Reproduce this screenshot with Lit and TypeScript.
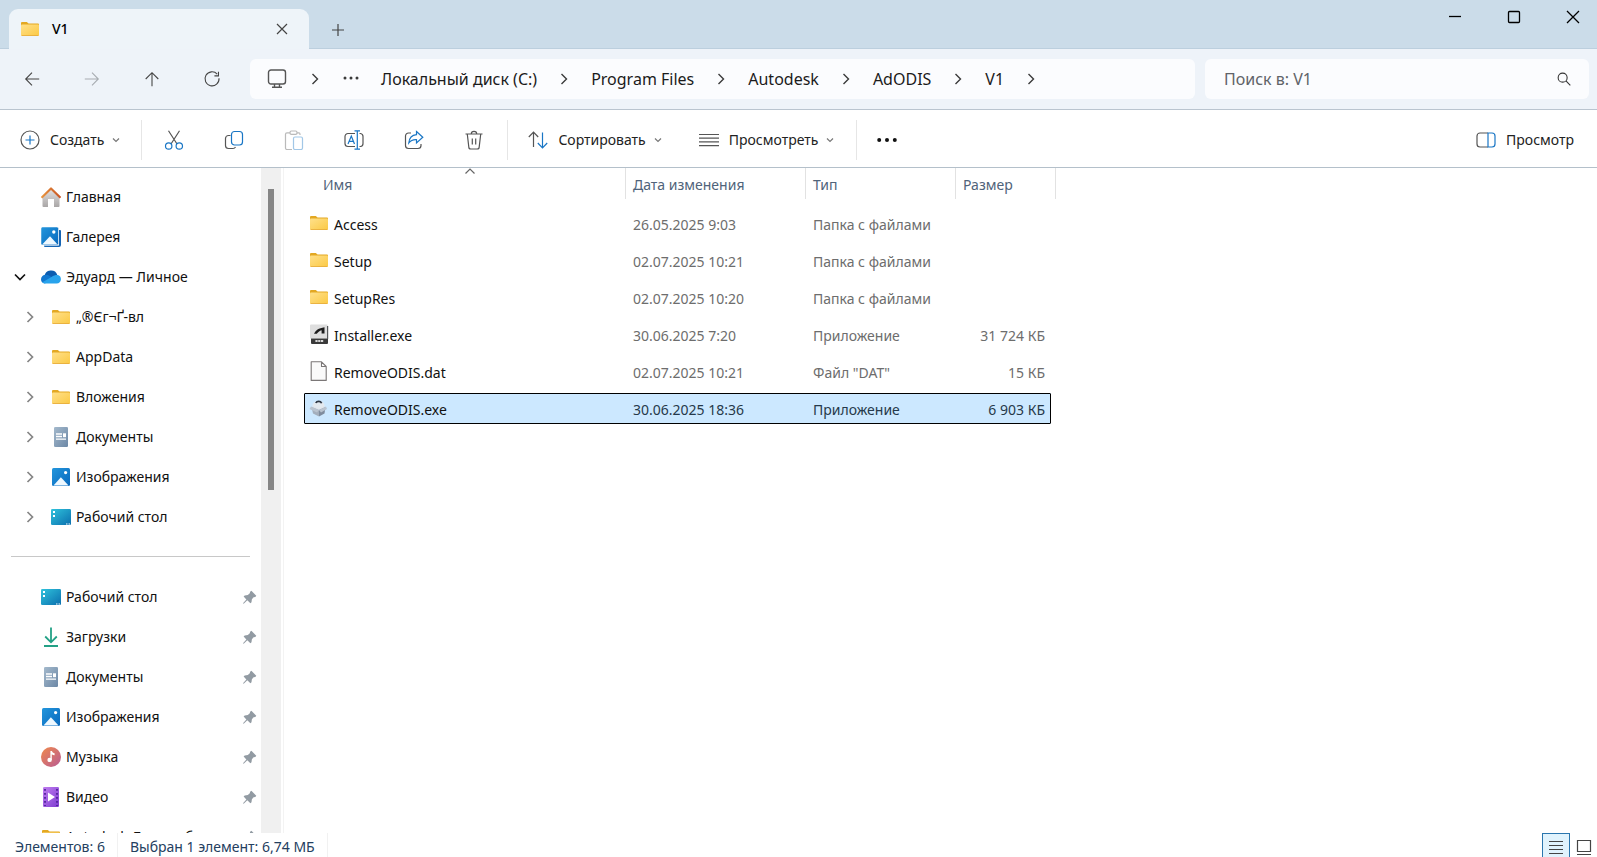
import { LitElement, html, css, svg, nothing } from "lit";
import { customElement, state } from "lit/decorators.js";

const glyphs: Record<string, unknown> = {
  close: svg`<path d="M5 5L15 15M15 5L5 15" />`,
  plus: svg`<path d="M10 4V16M4 10H16" />`,
  minimize: svg`<path d="M4 9.5H16" />`,
  maximize: svg`<rect x="4.5" y="4.5" width="11" height="11" rx="1" />`,
  windowClose: svg`<path d="M4 4L16 16M16 4L4 16" />`,
  back: svg`<path d="M18 10H3.5M10 3L3 10L10 17" />`,
  forward: svg`<path d="M2 10H16.5M10 3L17 10L10 17" />`,
  up: svg`<path d="M10 18V3.5M3 10L10 3L17 10" />`,
  refresh: svg`<path d="M15.8 4.6A7.8 7.8 0 1 0 17.8 9.2M17.2 2V6.5H12.7" />`,
  monitor: svg`<rect x="1.5" y="1" width="17" height="14" rx="2.5" /><path d="M7.5 15V18M12.5 15V18M5 18.3H15" />`,
  search: svg`<circle cx="8.5" cy="8.5" r="5" /><path d="M12.2 12.2L17 17" />`,
  right: svg`<path d="M7.5 5L12.5 10L7.5 15" />`,
  down: svg`<path d="M5 7.5L10 12.5L15 7.5" />`,
  smallDown: svg`<path d="M7 8.5L10 11.5L13 8.5" />`,
  smallUp: svg`<path d="M5.5 12.5L10 8L14.5 12.5" />`,
  dots: svg`<g fill="currentColor" stroke="none"><circle cx="4" cy="9" r="1.5" /><circle cx="10" cy="9" r="1.5" /><circle cx="16" cy="9" r="1.5" /></g>`,
  more: svg`<g fill="currentColor" stroke="none"><circle cx="2.2" cy="10" r="2" /><circle cx="10" cy="10" r="2" /><circle cx="17.8" cy="10" r="2" /></g>`,
  create: svg`<circle cx="10" cy="10" r="9" /><path class="blue" d="M10 5.5V14.5M5.5 10H14.5" />`,
  cut: svg`<path d="M4.5 .8L13 14M15.5 .8L7 14" /><g class="blue"><circle cx="4.7" cy="16" r="3.2" /><circle cx="15.3" cy="16" r="3.2" /></g>`,
  copy: svg`<path d="M6.5 5.5H4.5A3 3 0 0 0 1.5 8.5V15.5A3 3 0 0 0 4.5 18.5H9A3 3 0 0 0 11.5 17" /><rect class="blue" x="7.5" y="1.5" width="11" height="13.5" rx="3" />`,
  paste: svg`<path d="M6 2.8H3A1.5 1.5 0 0 0 1.5 4.3V18A1.5 1.5 0 0 0 3 19.5H8M13 2.8H15A1.5 1.5 0 0 1 16 4.3V5" /><rect x="6" y="1" width="7" height="3.4" rx="1.4" /><rect class="blue" x="9.5" y="7" width="9" height="12.5" rx="1.5" />`,
  rename: svg`<path d="M11 3.5H4A3 3 0 0 0 1 6.5V13.5A3 3 0 0 0 4 16.5H11M15.5 3.5H16.5A3 3 0 0 1 19 6.5V13.5A3 3 0 0 1 16.5 16.5H15.5" /><path class="blue" d="M13.3 .8V19.2M10.5 .8H16M10.5 19.2H16M4 14L7.3 6L10.5 14M5.2 11.3H9.4" />`,
  share: svg`<path d="M7 3H4.5A3 3 0 0 0 1.5 6V15.5A3 3 0 0 0 4.5 18.5H14A3 3 0 0 0 17 15.5V14" /><path class="blue" d="M12.5 1.5L18.8 7.2L12.5 13V9.7C9 9.5 6.5 10.7 4.8 13C5.2 8.5 8 5 12.5 4.7Z" />`,
  trash: svg`<path d="M1.5 4H18.5M7.3 3.8C7.3 .5 12.7 .5 12.7 3.8M3.3 4.3L4.8 17A2 2 0 0 0 6.8 19H13.2A2 2 0 0 0 15.2 17L16.7 4.3M8.3 8.5V14.5M11.7 8.5V14.5" />`,
  sort: svg`<path d="M5.5 17V2.5M.8 7L5.5 2.2L10.2 7" /><path class="blue" d="M14.5 2.5V17M9.8 13L14.5 17.8L19.2 13" />`,
  list: svg`<path d="M0 4.5H20M0 8.2H20M0 11.9H20M0 15.6H20" />`,
  pane: svg`<path d="M12 3H4A3 3 0 0 0 1 6V14A3 3 0 0 0 4 17H12" /><path class="blue" d="M12 3H16A3 3 0 0 1 19 6V14A3 3 0 0 1 16 17H12Z" />`,
  pin: svg`<path fill="currentColor" stroke="none" d="M11.4 3.8L16.3 8.7L15.3 10L13.6 10.2L11.9 12.2L11.5 15.2L10.4 16.3L7.3 13.2L3.7 16.8L3 16.2L6.4 12.4L3.6 9.5L4.7 8.4L7.8 8.1L9.8 6.3L10.1 4.8Z" />`,
};

const pictures: Record<string, unknown> = {
  folder: svg`<path fill="#e3a822" d="M1 4A1 1 0 0 1 2 3H6.8L8.6 4.6H18A1 1 0 0 1 19 5.6V9H1Z" /><rect x="1" y="5.5" width="18" height="11.5" rx="1" fill="url(#gFolder)" /><path fill="#e5a93a" d="M1.3 16.2H18.7L18 17H2Z" />
    <defs><linearGradient id="gFolder" x1="0" y1="0" x2="1" y2="1"><stop offset="0" stop-color="#ffe08a" /><stop offset="1" stop-color="#fbc944" /></linearGradient></defs>`,
  home: svg`<path fill="url(#gHome)" d="M1.5 9L10 2L18.5 9V19A1 1 0 0 1 17.6 20H13V12H7V20H2.4A1 1 0 0 1 1.5 19Z" /><path fill="none" stroke="url(#gRoof)" stroke-width="2.2" stroke-linejoin="round" d="M.5 10.8L10 1.5L19.5 10.8" />
    <defs><linearGradient id="gHome" x1="0" y1="0" x2="0" y2="1"><stop offset="0" stop-color="#e4e2e2" /><stop offset="1" stop-color="#a9a6a6" /></linearGradient><linearGradient id="gRoof"><stop offset="0" stop-color="#e8953f" /><stop offset="1" stop-color="#c85423" /></linearGradient></defs>`,
  gallery: svg`<path fill="#1565b4" d="M18 3H19A1 1 0 0 1 20 4V18A2 2 0 0 1 18 20H4A1 1 0 0 1 3 19V18.5H18Z" /><rect width="17.5" height="18" rx="1.5" fill="url(#gPic)" stroke="#fff" stroke-width=".5" /><path fill="#eef8ff" d="M1.2 17.5L9 9.3L16.6 17.5Z" /><circle cx="12.8" cy="5" r="1.7" fill="#fff" />
    <defs><linearGradient id="gPic" x1="0" y1="0" x2="1" y2="1"><stop offset="0" stop-color="#2396dc" /><stop offset="1" stop-color="#0868bd" /></linearGradient></defs>`,
  cloud: svg`<path fill="#0b5cb0" d="M3.5 9.5A6.6 6.6 0 0 1 16.3 8L18.5 12L8 14Z" /><path fill="#1177cf" d="M0 12.3A4.6 4.6 0 0 1 4.8 7.8C7 7.6 9 9 12 11L4 16.5A4.3 4.3 0 0 1 0 12.3Z" /><path fill="#28a3ec" d="M4.7 16.6C3 16.6 2 16 1.4 15.2L10.5 10C14.5 7.2 18 7.5 19.3 9.7C21 13 19 16.6 15.6 16.6Z" />`,
  document: svg`<rect x="3" width="14" height="20" rx="1.3" fill="url(#gDoc)" /><path fill="none" stroke="#fff" stroke-width="1.3" d="M5 7H11M5 9.5H11M5 12.2H15" /><path fill="#fff" d="M12 6.3H15V10.2H12Z" />
    <defs><linearGradient id="gDoc" x1="0" y1="0" x2="1" y2="1"><stop offset="0" stop-color="#a4b9cc" /><stop offset="1" stop-color="#6c88a6" /></linearGradient></defs>`,
  image: svg`<rect x="1" y="1" width="18" height="18" rx="1.5" fill="url(#gImg)" /><path fill="#eef8ff" d="M2.5 18.4L9.9 10.2L17.5 18.4Z" /><circle cx="14.6" cy="5.6" r="1.6" fill="#fff" />
    <defs><linearGradient id="gImg" x1="0" y1="0" x2="1" y2="1"><stop offset="0" stop-color="#2396dc" /><stop offset="1" stop-color="#0868bd" /></linearGradient></defs>`,
  desktop: svg`<rect y="2" width="20" height="16" rx="1.3" fill="url(#gDesk)" /><path fill="#fff" d="M2 4H4V6H2ZM2 8H4V10H2ZM15 16.5H16.5V17.5H15ZM17.5 16.5H19V17.5H17.5Z" />
    <defs><linearGradient id="gDesk" x1="0" y1="0" x2="1" y2="1"><stop offset="0" stop-color="#2fc3dc" /><stop offset="1" stop-color="#0b6fae" /></linearGradient></defs>`,
  download: svg`<path fill="none" stroke="#23a186" stroke-width="1.8" d="M10 .5V15M4.2 9.5L10 15.3L15.8 9.5M3 19H17" />`,
  music: svg`<circle cx="10" cy="10" r="10" fill="url(#gMusic)" /><circle cx="8.6" cy="12.9" r="2.2" fill="#fff" /><path fill="#fff" d="M9.4 4H11C11.3 5.4 12.2 6 13.6 6.2V8.2C12.4 8.2 11.5 7.8 10.8 7.2V13H9.4Z" />
    <defs><linearGradient id="gMusic" x1="0" y1="0" x2="1" y2="1"><stop offset="0" stop-color="#f08a4c" /><stop offset="1" stop-color="#b85a94" /></linearGradient></defs>`,
  video: svg`<rect x="2" width="16" height="20" rx="1.2" fill="url(#gVideo)" /><path fill="#fff" d="M7 5.5L14 10L7 14.5Z" /><path fill="none" stroke="#4b1f96" stroke-width="1.7" stroke-dasharray="1.7 2.3" d="M4 2V19M16 2V19" />
    <defs><linearGradient id="gVideo" x1="0" y1="0" x2="1" y2="1"><stop offset="0" stop-color="#c07cf0" /><stop offset="1" stop-color="#7d3cd0" /></linearGradient></defs>`,
  installer: svg`<path fill="#dedede" d="M1 1.5A1 1 0 0 1 2 .5H18.5V14.5H1Z" /><path fill="#3a3a3a" d="M2 14.5H19V19A1 1 0 0 1 18 20H3A1 1 0 0 1 2 19Z" /><path fill="#55585a" d="M18 2H19.2V15H18Z" /><path fill="#1c1c1c" d="M5 9.8C6.5 6.5 9.5 4 15.5 3.2V9.5H12.6V6.2C10.5 6.8 8.8 8.2 7.8 9.8Z" /><path stroke="#d8d8d8" stroke-width="2" stroke-dasharray="2.2 .6" d="M6.4 17H14.6" />`,
  file: svg`<path fill="#fafafa" stroke="#7b7777" stroke-width="1.1" stroke-linejoin="round" d="M2.2 .8H12.5L17.2 5.5V19.4H2.2ZM12.5 .8V5.5H17.2" />`,
  remove: svg`<path fill="#dfe5ec" d="M2 9L10 6.5L17 9L10 12Z" /><path fill="#a3aebc" d="M2.5 9L10 12V18.5L4 15.5Z" /><path fill="#7f8c9d" d="M16.5 9L10 12V18.5L15.5 15.5Z" /><path fill="#b9c3cf" d="M2 8.5L.5 11L8 14.4L10 12ZM17 8.5L18 11L12 14.4L10 12Z" /><path fill="#e3e9ef" d="M3.5 8C3.5 4.5 6.5 3 9.5 3S15.5 4.5 15.5 8L10 11Z" /><path fill="none" stroke="#2d3642" stroke-width="1.7" d="M6.8 5C7.8 2.8 11.6 2.6 12.6 5.2" />`,
};

const glyph = (name: string, cls = "") =>
  html`<svg class="glyph ${cls}" viewBox="0 0 20 20" aria-hidden="true">${glyphs[name]}</svg>`;
const picture = (name: string) =>
  html`<svg class="picture" viewBox="0 0 20 20" aria-hidden="true">${pictures[name]}</svg>`;

interface Place { icon: string; label: string; open?: boolean; }
interface Entry { icon: string; name: string; date: string; type: string; size: string; }

@customElement("app-root")
export class AppRoot extends LitElement {
  @state() private selected = "RemoveODIS.exe";

  private path = ["Локальный диск (C:)", "Program Files", "Autodesk", "AdODIS", "V1"];

  private roots: Place[] = [
    { icon: "home", label: "Главная" },
    { icon: "gallery", label: "Галерея" },
    { icon: "cloud", label: "Эдуард — Личное", open: true },
  ];

  private cloud: Place[] = [
    { icon: "folder", label: "„®Єг¬Ґ-вл" },
    { icon: "folder", label: "AppData" },
    { icon: "folder", label: "Вложения" },
    { icon: "document", label: "Документы" },
    { icon: "image", label: "Изображения" },
    { icon: "desktop", label: "Рабочий стол" },
  ];

  private pinned: Place[] = [
    { icon: "desktop", label: "Рабочий стол" },
    { icon: "download", label: "Загрузки" },
    { icon: "document", label: "Документы" },
    { icon: "image", label: "Изображения" },
    { icon: "music", label: "Музыка" },
    { icon: "video", label: "Видео" },
    { icon: "folder", label: "Autodesk Для учебы" },
  ];

  private entries: Entry[] = [
    { icon: "folder", name: "Access", date: "26.05.2025 9:03", type: "Папка с файлами", size: "" },
    { icon: "folder", name: "Setup", date: "02.07.2025 10:21", type: "Папка с файлами", size: "" },
    { icon: "folder", name: "SetupRes", date: "02.07.2025 10:20", type: "Папка с файлами", size: "" },
    { icon: "installer", name: "Installer.exe", date: "30.06.2025 7:20", type: "Приложение", size: "31 724 КБ" },
    { icon: "file", name: "RemoveODIS.dat", date: "02.07.2025 10:21", type: "Файл \"DAT\"", size: "15 КБ" },
    { icon: "remove", name: "RemoveODIS.exe", date: "30.06.2025 18:36", type: "Приложение", size: "6 903 КБ" },
  ];

  static styles = css`
    :host {
      display: flex;
      flex-direction: column;
      height: 100vh;
      overflow: hidden;
      background: #fff;
      color: #1b1b1b;
      font: 14px/20px "Noto Sans", "Open Sans", sans-serif;
    }
    * { box-sizing: border-box; }
    button {
      display: flex;
      align-items: center;
      justify-content: center;
      margin: 0;
      padding: 0;
      border: 0;
      background: none;
      color: inherit;
      font: inherit;
      white-space: nowrap;
    }
    ul, ol { list-style: none; margin: 0; padding: 0; }
    a { color: inherit; text-decoration: none; }
    .glyph {
      flex: none;
      width: 20px;
      height: 20px;
      fill: none;
      stroke: currentColor;
      stroke-width: 1.2;
    }
    .picture { flex: none; width: 20px; height: 20px; }
    .blue { stroke: #1976c5; }

    .titlebar {
      display: flex;
      flex: none;
      height: 49px;
      padding-left: 9px;
      background: #cbdce9;
      box-shadow: inset 0 -1px #bccfde;
    }
    .tab {
      display: flex;
      align-items: center;
      align-self: flex-end;
      gap: 12px;
      width: 300px;
      height: 40px;
      padding: 0 17px 0 11px;
      border-radius: 9px 9px 0 0;
      background: #eef4f9;
    }
    .tab .glyph { color: #444; }
    .tab-name { flex: 1; font-weight: 500; color: #000; }
    .new-tab { width: 58px; padding-top: 10px; color: #444; }
    .window-buttons { display: flex; margin-left: auto; }
    .window-buttons button { width: 59px; height: 34px; color: #000; }
    .window-buttons .last { width: 54px; padding-left: 6px; }
    .window-buttons .glyph { stroke-width: 1.3; }

    .navbar {
      display: flex;
      flex: none;
      align-items: center;
      height: 61px;
      padding: 0 8px 0 2px;
      background: #eef3f9;
      border-bottom: 1px solid #b9c4cf;
    }
    .nav-button { width: 60px; height: 40px; color: #444; }
    .nav-button .glyph { width: 18px; height: 18px; }
    .faded { color: #a7acb1; }
    .address {
      display: flex;
      flex: 1;
      align-items: center;
      height: 40px;
      margin: 0 10px 0 8px;
      padding-left: 17px;
      border-radius: 6px;
      background: #fbfcfe;
      font-size: 16px;
      line-height: 24px;
    }
    .address .glyph { color: #3a3a3a; stroke-width: 1.4; }
    .address .large { color: #555; }
    .crumbs { display: flex; align-items: center; }
    .crumbs li { display: flex; align-items: center; }
    .crumbs li .glyph { margin: 0 17px; }
    .address .glyph.lead { margin: 0 8px 0 18px; }
    .ellipsis { margin: 0 20px 0 8px; }
    .search {
      display: flex;
      align-items: center;
      width: 384px;
      height: 40px;
      padding: 0 16px 0 19px;
      border-radius: 6px;
      background: #fbfcfe;
    }
    .search .glyph { width: 18px; height: 18px; color: #333; }
    .search input {
      flex: 1;
      min-width: 0;
      padding: 0;
      border: 0;
      outline: 0;
      background: none;
      font: 16px/24px "Noto Sans", "Open Sans", sans-serif;
      color: #1b1b1b;
    }
    .search input::placeholder { color: #5f6368; opacity: 1; }

    .toolbar {
      display: flex;
      flex: none;
      align-items: center;
      height: 58px;
      padding: 3px 23px 0 20px;
      border-bottom: 1px solid #b4c0ca;
      color: #222;
    }
    .toolbar button { gap: 10px; height: 40px; }
    .toolbar .glyph { color: #555; }
    .toolbar .arrow { margin-left: -8px; color: #777; }
    .toolbar .tool { width: 60px; }
    .toolbar .disabled { opacity: 0.4; }
    .toolbar .more .glyph { color: #111; }
    .toolbar .view { margin-left: 31px; }
    .toolbar .preview { margin-left: auto; }
    .rule { width: 1px; height: 40px; background: #e6e6e6; }
    .after-create { margin: 0 2px 0 15px; }
    .after-tools { margin: 0 20px 0 3px; }
    .after-view { margin-left: 16px; }

    .body { display: flex; flex: 1; min-height: 0; }
    .sidebar {
      width: 261px;
      flex: none;
      padding-top: 9px;
      overflow: hidden;
      color: #111;
    }
    .place {
      display: flex;
      align-items: center;
      gap: 5px;
      height: 40px;
      padding-right: 1px;
    }
    .place a { display: flex; align-items: center; gap: 5px; flex: 1; white-space: nowrap; }
    .place .twisty { width: 36px; flex: none; padding-left: 4px; }
    .place .twisty .glyph { stroke-width: 1.7; }
    .place.nested .twisty { width: 46px; padding-left: 14px; color: #858585; }
    .place .pin { color: #929ba3; }
    .divider { margin: 19px 11px 20px; border: 0; border-top: 1px solid #c8c8c8; }
    .scroll { width: 20px; flex: none; padding: 21px 7px; background: #f0f0f0; }
    .thumb { width: 6px; height: 301px; background: #868686; }
    .files {
      flex: 1;
      min-width: 0;
      margin-left: 2px;
      padding-left: 20px;
      border-left: 1px solid #f3f3f3;
      overflow: hidden;
    }
    table, thead, tbody { display: block; }
    th { padding: 0; text-align: left; font-weight: 400; }
    td { padding: 0; }
    .head {
      display: grid;
      grid-template-columns: 312px 180px 150px 100px;
      width: 742px;
      height: 31px;
      margin: 0 0 9px 10px;
      color: #50637a;
    }
    .head th {
      position: relative;
      padding: 7px 0 0 7px;
      border-right: 1px solid #e2e2e2;
    }
    .head th:first-child { padding-left: 9px; }
    .sorted { position: absolute; top: -7px; left: 50%; margin-left: -10px; color: #666; }
    .row {
      display: grid;
      grid-template-columns: 322px 180px 150px 95px;
      align-items: center;
      width: 747px;
      height: 31px;
      margin-bottom: 6px;
      padding-top: 2px;
      color: #6d6d6d;
    }
    .row td { padding-left: 7px; }
    .row .name { display: flex; gap: 5px; padding-left: 5px; color: #111; }
    .row .name .picture { margin-top: -2px; margin-bottom: 2px; }
    .row .size { padding: 0 6px 0 0; text-align: right; }
    .row.chosen {
      background: #cce8ff;
      outline: 1px solid #000;
      outline-offset: -1px;
      border-radius: 1px;
      color: #26394a;
    }

    .status {
      display: flex;
      flex: none;
      align-items: center;
      height: 24px;
      padding-left: 15px;
      color: #24405f;
      overflow: hidden;
    }
    .status span {
      height: 24px;
      padding: 4px 12px 0 0;
      margin-right: 12px;
      border-right: 1px solid #f1f1f1;
    }
    .views { display: flex; margin-left: auto; align-self: stretch; }
    .views button { width: 28px; height: 28px; color: #444; }
    .views button:last-child { width: 27px; }
    .views .active { border: 1px solid #2a76ae; background: #e0f3fd; }
  `;

  private place(p: Place, kind: "root" | "nested" | "pinned") {
    return html`<li class="place ${kind}">
      ${kind === "nested"
        ? html`<button class="twisty" aria-label="Развернуть">${glyph("right")}</button>`
        : p.open
          ? html`<button class="twisty" aria-label="Свернуть">${glyph("down")}</button>`
          : html`<span class="twisty"></span>`}
      <a href="#">${picture(p.icon)}<span>${p.label}</span></a>
      ${kind === "pinned" ? glyph("pin", "pin") : nothing}
    </li>`;
  }

  private tool(icon: string, label: string, cls = "") {
    return html`<button class="tool ${cls}" aria-label=${label}>${glyph(icon)}</button>`;
  }

  render() {
    return html`
      <header class="titlebar">
        <div class="tab">
          ${picture("folder")}<span class="tab-name">V1</span>
          <button aria-label="Закрыть вкладку">${glyph("close")}</button>
        </div>
        <button class="new-tab" aria-label="Новая вкладка">${glyph("plus")}</button>
        <div class="window-buttons">
          <button aria-label="Свернуть">${glyph("minimize")}</button>
          <button aria-label="Развернуть">${glyph("maximize")}</button>
          <button class="last" aria-label="Закрыть">${glyph("windowClose")}</button>
        </div>
      </header>

      <nav class="navbar">
        <button class="nav-button" aria-label="Назад">${glyph("back")}</button>
        <button class="nav-button faded" aria-label="Вперед">${glyph("forward")}</button>
        <button class="nav-button" aria-label="Вверх">${glyph("up")}</button>
        <button class="nav-button" aria-label="Обновить">${glyph("refresh")}</button>
        <div class="address">
          ${glyph("monitor", "large")}${glyph("right", "lead")}
          <button class="ellipsis" aria-label="Показать путь">${glyph("dots")}</button>
          <ol class="crumbs">
            ${this.path.map((p) => html`<li><a href="#">${p}</a>${glyph("right")}</li>`)}
          </ol>
        </div>
        <label class="search">
          <input type="text" aria-label="Поиск" placeholder="Поиск в: V1" />${glyph("search")}
        </label>
      </nav>

      <div class="toolbar">
        <button class="create">${glyph("create")}<span>Создать</span>${glyph("smallDown", "arrow")}</button>
        <span class="rule after-create"></span>
        ${this.tool("cut", "Вырезать")} ${this.tool("copy", "Копировать")}
        ${this.tool("paste", "Вставить", "disabled")} ${this.tool("rename", "Переименовать")}
        ${this.tool("share", "Поделиться")} ${this.tool("trash", "Удалить")}
        <span class="rule after-tools"></span>
        <button class="sort">${glyph("sort")}<span>Сортировать</span>${glyph("smallDown", "arrow")}</button>
        <button class="view">${glyph("list")}<span>Просмотреть</span>${glyph("smallDown", "arrow")}</button>
        <span class="rule after-view"></span>
        ${this.tool("more", "Подробнее", "more")}
        <button class="preview">${glyph("pane")}<span>Просмотр</span></button>
      </div>

      <div class="body">
        <aside class="sidebar">
          <ul>
            ${this.roots.map((p) => this.place(p, "root"))}
            ${this.cloud.map((p) => this.place(p, "nested"))}
          </ul>
          <hr class="divider" />
          <ul>${this.pinned.map((p) => this.place(p, "pinned"))}</ul>
        </aside>
        <div class="scroll"><div class="thumb"></div></div>
        <main class="files">
          <table>
            <thead>
              <tr class="head">
                <th>Имя${glyph("smallUp", "sorted")}</th>
                <th>Дата изменения</th>
                <th>Тип</th>
                <th>Размер</th>
              </tr>
            </thead>
            <tbody>
              ${this.entries.map(
                (e) => html`<tr
                  class="row ${e.name === this.selected ? "chosen" : ""}"
                  @click=${() => (this.selected = e.name)}
                >
                  <td class="name">${picture(e.icon)}<span>${e.name}</span></td>
                  <td>${e.date}</td>
                  <td>${e.type}</td>
                  <td class="size">${e.size}</td>
                </tr>`
              )}
            </tbody>
          </table>
        </main>
      </div>

      <footer class="status">
        <span>Элементов: 6</span><span>Выбран 1 элемент: 6,74 МБ</span>
        <div class="views">
          <button class="active" aria-label="Таблица">
            <svg class="glyph" viewBox="0 0 20 20"><path d="M3 4.5H17M3 8.5H17M3 12.5H17M3 16.5H17" /></svg>
          </button>
          <button aria-label="Крупные значки">
            <svg class="glyph" viewBox="0 0 20 20"><path d="M3.5 3.5H16.5V14.5H3.5ZM3 17.5H17" /></svg>
          </button>
        </div>
      </footer>
    `;
  }
}
